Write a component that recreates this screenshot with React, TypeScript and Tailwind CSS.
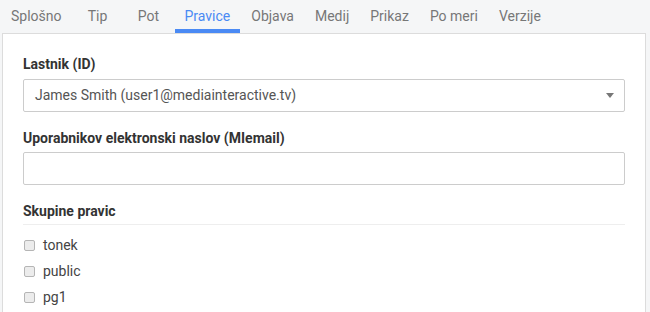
import React from 'react'

const tabs = ['Splošno', 'Tip', 'Pot', 'Pravice', 'Objava', 'Medij', 'Prikaz', 'Po meri', 'Verzije']
const groups = ['tonek', 'public', 'pg1']

const App: React.FC = () => {
    return (
        <div className="w-[650px] h-[312px] overflow-hidden bg-[#f5f6f7] font-['Roboto',sans-serif]">
            <div className="flex h-[33px] pl-[1px] gap-[1px]">
                {tabs.map((tab) => (
                    <div
                        key={tab}
                        className={
                            tab === 'Pravice'
                                ? 'flex items-center justify-center min-w-[50px] px-[10px] h-full text-[14px] text-[#4a8af4] border-b-[4px] border-[#4a8af4] pt-[3px]'
                                : 'flex items-center justify-center min-w-[50px] px-[10px] h-full text-[14px] text-[#777] pb-[1px]'
                        }
                    >
                        {tab}
                    </div>
                ))}
            </div>
            <div className="ml-[2px] w-[644px] h-[300px] bg-white border border-[#dcdcdc] px-[20px] pt-[20px]">
                <div className="text-[14px] font-bold text-[#333] leading-[20px]">Lastnik (ID)</div>
                <div className="mt-[5px] h-[33px] border border-[#ccc] rounded-[2px] flex items-center justify-between pl-[11px] pr-[10px]">
                    <span className="text-[14px] text-[#555]">James Smith (user1@mediainteractive.tv)</span>
                    <span className="w-0 h-0 border-l-[4px] border-r-[4px] border-t-[5px] border-l-transparent border-r-transparent border-t-[#777]"></span>
                </div>
                <div className="mt-[16px] text-[14px] font-bold text-[#333] leading-[20px]">Uporabnikov elektronski naslov (MIemail)</div>
                <div className="mt-[4px] h-[33px] border border-[#ccc] rounded-[2px]"></div>
                <div className="mt-[16px] text-[14px] font-bold text-[#333] leading-[20px] pb-[3px] border-b border-[#eee]">Skupine pravic</div>
                <div className="mt-[7px] flex flex-col">
                    {groups.map((group) => (
                        <div key={group} className="flex items-center h-[26px]">
                            <span className="w-[11px] h-[11px] ml-[1px] rounded-[2px] border border-[#b5b5b5] bg-[#ececec]"></span>
                            <span className="ml-[8px] text-[14px] text-[#444]">{group}</span>
                        </div>
                    ))}
                </div>
            </div>
        </div>
    )
}

export default App
